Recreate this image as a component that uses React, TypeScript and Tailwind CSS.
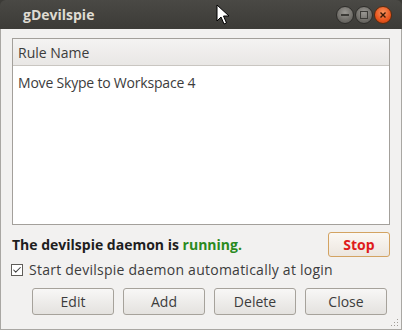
import { Check } from 'lucide-react';

const font = { fontFamily: '"Open Sans", "Noto Sans", sans-serif' };

function WinButton({ kind }: { kind: 'min' | 'max' | 'close' }) {
  if (kind === 'close') {
    return (
      <div className="w-[18px] h-[18px] rounded-full bg-[radial-gradient(circle_at_50%_35%,#f7945f,#e9541d_60%,#b8400f)] flex items-center justify-center border border-[#5a2c10]">
        <svg width="8" height="8" viewBox="0 0 8 8">
          <path d="M1.5 1.5 L6.5 6.5 M6.5 1.5 L1.5 6.5" stroke="#3a1a08" strokeWidth="1.4" />
        </svg>
      </div>
    );
  }
  return (
    <div className="w-[18px] h-[18px] rounded-full bg-[radial-gradient(circle_at_50%_35%,#9a9893,#6f6d68_60%,#55534f)] flex items-center justify-center border border-[#2e2d2a]">
      {kind === 'min' ? (
        <div className="w-[8px] h-[2px] bg-[#3c3b37]" />
      ) : (
        <div className="w-[8px] h-[8px] border-[1.5px] border-[#3c3b37]" />
      )}
    </div>
  );
}

function Btn({ label }: { label: string }) {
  return (
    <button className="w-[82px] h-[27px] rounded-[3px] border border-[#a6a29b] bg-gradient-to-b from-[#f8f7f6] to-[#e4e2df] text-[14px] text-[#3c3c3c] flex items-center justify-center">
      {label}
    </button>
  );
}

export default function App() {
  return (
    <div className="w-[402px] h-[330px] relative overflow-hidden bg-[#3c3b37]" style={font}>
      {/* title bar */}
      <div className="h-[29px] rounded-t-[6px] bg-gradient-to-b from-[#4a4945] to-[#3c3b37] flex items-center pl-[23px] pr-[10px]">
        <span className="text-[14px] font-bold text-[#dfdbd2] flex-1">gDevilspie</span>
        <div className="flex items-center gap-[1px]">
          <WinButton kind="min" />
          <WinButton kind="max" />
          <WinButton kind="close" />
        </div>
      </div>

      {/* body */}
      <div className="h-[301px] bg-[#f2f1f0] border-x border-b border-[#a9a7a3] flex flex-col pl-[11px] pr-[11px] pt-[9px]">
        <div className="h-[187px] border border-[#a3a09b] bg-white flex flex-col">
          <div className="h-[27px] border-b border-[#c9c6c1] bg-gradient-to-b from-[#f4f3f2] to-[#e9e7e5] flex items-center pl-[5px] text-[14px] text-[#3c3c3c]">
            Rule Name
          </div>
          <div className="h-[32px] flex items-center pl-[5px] text-[14px] text-[#3c3c3c] tracking-[-0.2px]">
            Move Skype to Workspace 4
          </div>
        </div>

        <div className="flex items-center justify-between mt-[7px]">
          <span className="text-[14px] font-bold text-[#1e1e1e]">
            The devilspie daemon is <span className="text-[#2a8a1e]">running.</span>
          </span>
          <button className="w-[62px] h-[25px] rounded-[3px] border border-[#d3a362] bg-gradient-to-b from-[#fbf8f4] to-[#ece6df] text-[14px] font-bold text-[#df1b1b] flex items-center justify-center">
            Stop
          </button>
        </div>

        <div className="flex items-center gap-[6px] mt-[2px] -ml-[1px]">
          <div className="w-[12px] h-[12px] border border-[#5f5d59] bg-white flex items-center justify-center">
            <Check size={10} strokeWidth={2.5} className="text-[#3c3c3c]" />
          </div>
          <span className="text-[14px] text-[#3c3c3c] tracking-[0.25px]">Start devilspie daemon automatically at login</span>
        </div>

        <div className="flex gap-[9px] mt-[8px] pl-[20px]">
          <Btn label="Edit" />
          <Btn label="Add" />
          <Btn label="Delete" />
          <Btn label="Close" />
        </div>
      </div>

      {/* resize grip */}
      <svg className="absolute right-[3px] bottom-[3px]" width="10" height="10" viewBox="0 0 10 10">
        {[[8, 2], [8, 5], [5, 5], [8, 8], [5, 8], [2, 8]].map(([x, y], i) => (
          <rect key={i} x={x} y={y} width="1" height="1" fill="#a09c96" />
        ))}
      </svg>

      {/* mouse cursor */}
      <svg className="absolute left-[216px] top-[4px]" width="14" height="22" viewBox="0 0 14 22">
        <path d="M1 1 L1 17 L5 13 L8 20 L10.5 19 L7.5 12 L13 12 Z" fill="white" stroke="black" strokeWidth="1" strokeLinejoin="round" />
      </svg>
    </div>
  );
}
